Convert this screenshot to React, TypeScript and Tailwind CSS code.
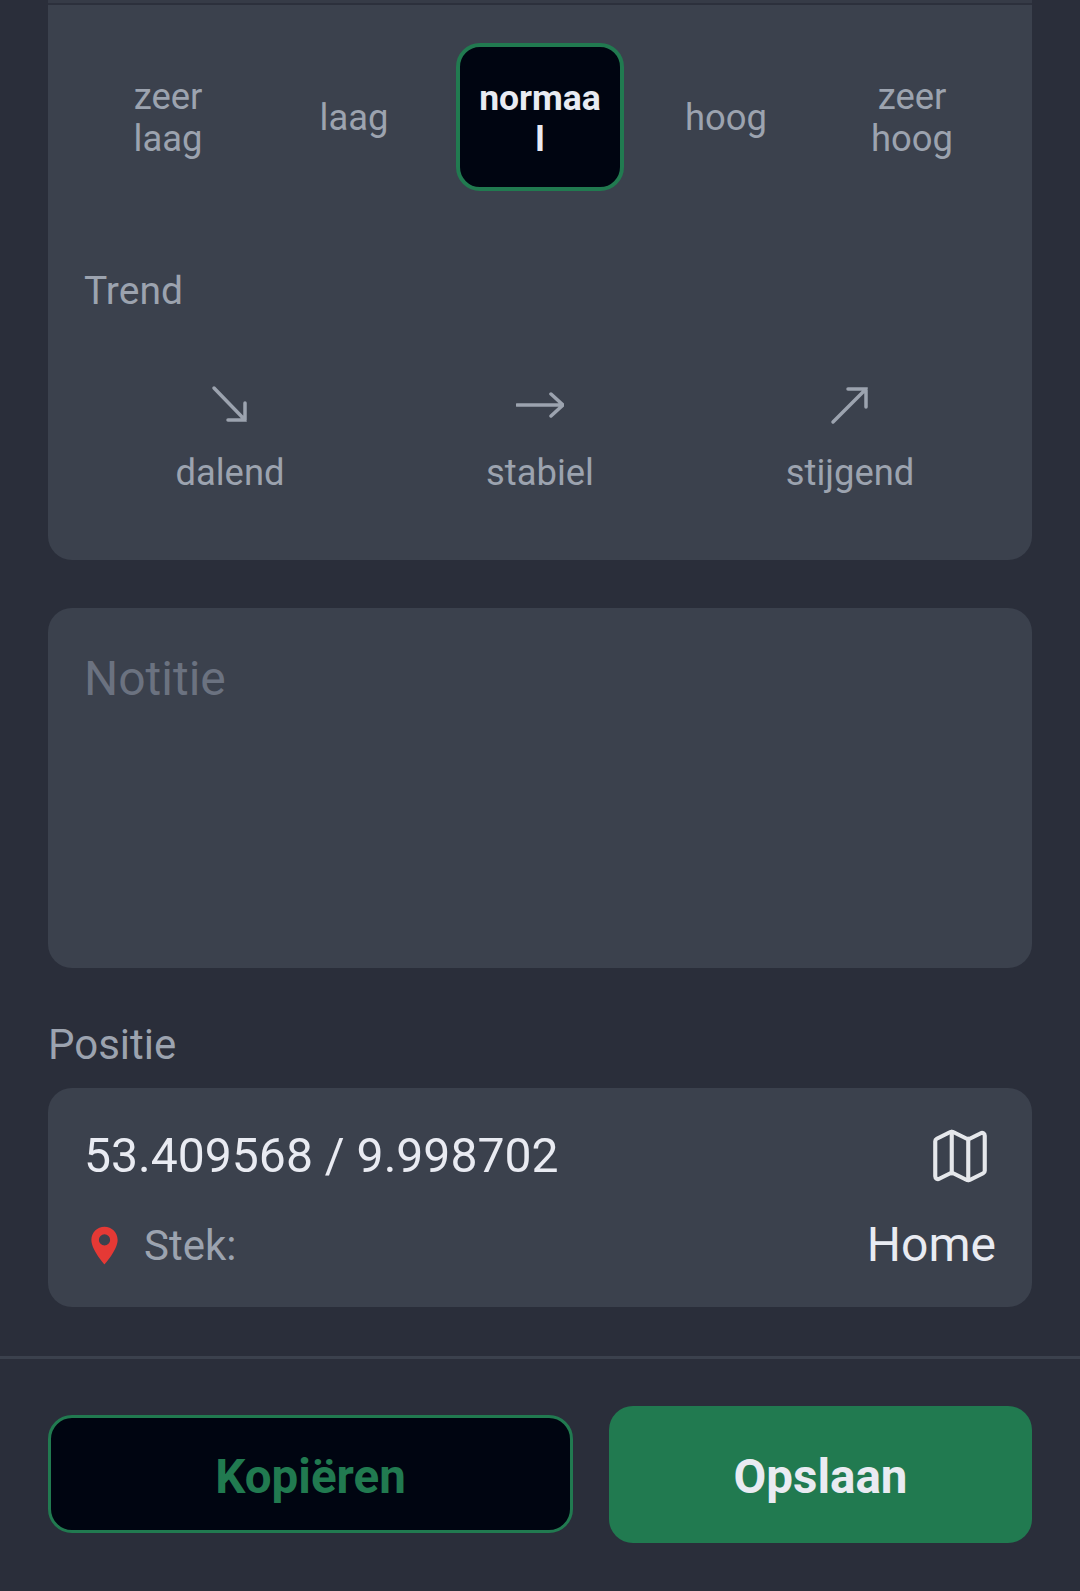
import { Map as MapIcon } from "lucide-react";

const levels = [
  { label: "zeer laag" },
  { label: "laag" },
  { label: "normaal", active: true },
  { label: "hoog" },
  { label: "zeer hoog" },
];

function ArrowDown() {
  return (
    <svg width="48" height="48" viewBox="0 0 48 48" fill="none" stroke="#9ca3af" strokeWidth="3.5" strokeLinecap="round">
      <path d="M8 7l31 32M39 22v17H22" />
    </svg>
  );
}

function ArrowFlat() {
  return (
    <svg width="48" height="48" viewBox="0 0 48 48" fill="none" stroke="#9ca3af" strokeWidth="3.5" strokeLinecap="round">
      <path d="M1 24h46M35 13l12 11-12 11" />
    </svg>
  );
}

function ArrowUp() {
  return (
    <svg width="48" height="48" viewBox="0 0 48 48" fill="none" stroke="#9ca3af" strokeWidth="3.5" strokeLinecap="round">
      <path d="M7 41L40 8M22 8h18v18" />
    </svg>
  );
}

const trends = [
  { label: "dalend", icon: <ArrowDown /> },
  { label: "stabiel", icon: <ArrowFlat /> },
  { label: "stijgend", icon: <ArrowUp /> },
];

export default function App() {
  return (
    <div className="flex h-[1591px] w-[1080px] flex-col overflow-hidden bg-[#2a2e3a] font-['Roboto',sans-serif]">
      <div className="flex-1 px-12">
        <div className="h-[560px] rounded-b-[24px] bg-[#3b414d] px-[27px]">
          <div className="-mx-[27px] h-[5px] border-b-[2px] border-[#2c303c] bg-[#363b47]" />
          <div className="grid grid-cols-5 pt-[38px]">
            {levels.map((l) => (
              <div key={l.label} className="px-[9px]">
                <div
                  className={
                    l.active
                      ? "flex h-[148px] items-center justify-center rounded-[24px] border-[4px] border-[#217a50] bg-[#000511] px-[16px] pt-[4px] text-center text-[35.5px] leading-[41px] font-bold break-all text-[#e9ebf2]"
                      : "flex h-[148px] items-center justify-center rounded-[24px] px-6 pt-[2px] text-center text-[36.4px] leading-[42px] text-[#9ca3af]"
                  }
                >
                  {l.label}
                </div>
              </div>
            ))}
          </div>
          <div className="mt-[77px] pl-[9px] text-[39px] leading-[46px] text-[#9ca3af]">Trend</div>
          <div className="mt-[67px] grid grid-cols-3">
            {trends.map((t) => (
              <div key={t.label} className="flex flex-col items-center gap-[23px] text-[36.4px] leading-[42px] text-[#9ca3af]">
                {t.icon}
                <span>{t.label}</span>
              </div>
            ))}
          </div>
        </div>

        <textarea
          placeholder="Notitie"
          className="mt-12 block h-[360px] w-full resize-none rounded-[24px] bg-[#3b414d] px-9 pt-[43px] text-[48px] leading-[56px] placeholder:text-[#6b7280]"
        />

        <div className="mt-[52px] text-[42px] leading-[49px] text-[#9ca3af]">Positie</div>

        <div className="mt-[19px] flex h-[219px] flex-col rounded-[24px] bg-[#3b414d] pr-9 pl-9">
          <div className="mt-[35px] flex items-center justify-between pr-[3px]">
            <span className="text-[48.1px] leading-[66px] text-[#e9ebf2]">53.409568 / 9.998702</span>
            <MapIcon size={66} strokeWidth={1.5} className="text-[#e5e7eb]" />
          </div>
          <div className="mt-[28px] flex items-center justify-between">
            <div className="-ml-[2px] flex items-center gap-[17px]">
              <svg width="45" height="45" viewBox="0 0 24 24" fill="#e53935">
                <path d="M12 2C8.13 2 5 5.13 5 9c0 5.25 7 13 7 13s7-7.75 7-13c0-3.87-3.13-7-7-7zm0 10a3 3 0 1 1 0-6 3 3 0 0 1 0 6z" />
              </svg>
              <span className="text-[42px] leading-[49px] text-[#9ca3af]">Stek:</span>
            </div>
            <span className="text-[48px] leading-[56px] text-[#e9ebf2]">Home</span>
          </div>
        </div>
      </div>

      <div className="flex h-[235px] items-center gap-[36px] border-t-[3px] border-[#3b414d] px-12 pb-[2px]">
        <button className="h-[118px] w-[525px] rounded-[24px] border-[3px] border-[#217a50] bg-[#000511] pt-[7px] text-[47.5px] font-bold text-[#217a50]">
          Kopiëren
        </button>
        <button className="h-[137px] flex-1 rounded-[24px] bg-[#217a50] pt-[7px] text-[47.5px] font-bold text-[#e9ebf2]">
          Opslaan
        </button>
      </div>
    </div>
  );
}
